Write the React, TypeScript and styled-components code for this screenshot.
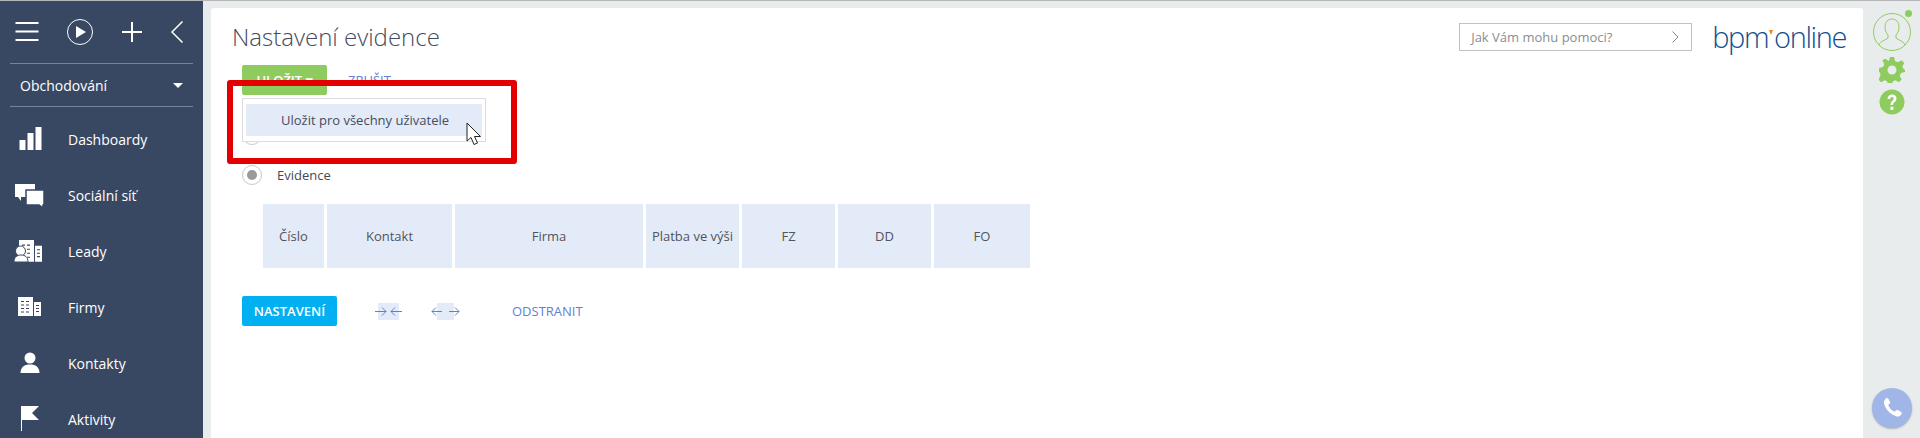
import React from 'react'
import styled, { createGlobalStyle } from 'styled-components'

const GlobalStyle = createGlobalStyle`
  html, body {
    margin: 0;
    padding: 0;
    height: 100%;
    background: #e9eced;
    font-family: 'Open Sans', 'Liberation Sans', sans-serif;
    overflow: hidden;
  }
  * { box-sizing: border-box; }
`

const Page = styled.div`
  display: flex;
  width: 1920px;
  height: 438px;
  overflow: hidden;
  border-top: 1px solid #b4b6b8;
`

const Sidebar = styled.aside`
  width: 203px;
  flex-shrink: 0;
  background: #394862;
  padding: 0 10px;
  color: #fff;
`

const TopIcons = styled.div`
  height: 63px;
  display: flex;
  align-items: center;
  justify-content: space-between;
  padding: 0 9px 0 5px;
  border-bottom: 1px solid #78839a;
`

const Workspace = styled.div`
  height: 43px;
  display: flex;
  align-items: center;
  justify-content: space-between;
  padding: 0 10px 0 10px;
  font-size: 14px;
  border-bottom: 1px solid #78839a;
`

const Caret = styled.span`
  width: 0;
  height: 0;
  border-left: 5px solid transparent;
  border-right: 5px solid transparent;
  border-top: 5px solid #fff;
`

const NavList = styled.nav`
  display: flex;
  flex-direction: column;
  padding-top: 4px;
`

const NavItem = styled.div`
  height: 56px;
  display: flex;
  align-items: center;
  font-size: 14px;
`

const NavIcon = styled.span`
  width: 58px;
  flex-shrink: 0;
  display: flex;
  align-items: center;
  padding-left: 8px;
`

const Main = styled.main`
  position: relative;
  flex: 1;
  margin: 7px 0 0 8px;
  background: #fff;
  border-radius: 3px 3px 0 0;
`

const Header = styled.header`
  height: 57px;
  display: flex;
  align-items: center;
  padding: 0 17px 0 21px;
`

const Title = styled.h1`
  margin: 0;
  flex: 1;
  font-size: 24px;
  font-weight: 300;
  color: #444b60;
`

const Search = styled.div`
  width: 233px;
  height: 28px;
  display: flex;
  align-items: center;
  justify-content: space-between;
  padding: 0 11px;
  border: 1px solid #c2c2c2;
  font-size: 13px;
  color: #8a8d92;
`

const Logo = styled.div`
  position: relative;
  margin-left: 20px;
  font-size: 29px;
  font-weight: 300;
  letter-spacing: -1.4px;
  line-height: 34px;
  color: #10508f;
`

const LogoMark = styled.span`
  display: inline-block;
  width: 0;
  height: 0;
  vertical-align: 13px;
  margin: 0 1px 0 1px;
  border-left: 2.5px solid transparent;
  border-right: 2.5px solid transparent;
  border-top: 5px solid #f58220;
`

const Toolbar = styled.div`
  display: flex;
  align-items: center;
  height: 30px;
  margin-left: 31px;
`

const SaveButton = styled.button`
  width: 85px;
  height: 30px;
  border: 0;
  border-radius: 2px;
  background: #8fcc5f;
  color: #fff;
  font: 600 13px 'Open Sans', sans-serif;
`

const LinkButton = styled.span`
  font-size: 13px;
  color: #5b82d8;
`

const CancelLink = styled(LinkButton)`
  margin-left: 21px;
`

const RadioList = styled.div`
  display: flex;
  flex-direction: column;
  gap: 20px;
  margin: 30px 0 0 31px;
`

const RadioRow = styled.label`
  display: flex;
  align-items: center;
  gap: 15px;
  height: 20px;
  font-size: 13px;
  color: #444b55;
`

const RadioCircle = styled.span<{ $on?: boolean }>`
  width: 20px;
  height: 20px;
  display: flex;
  align-items: center;
  justify-content: center;
  border: 1px solid #c8c8c8;
  border-radius: 50%;
  &::after {
    content: '';
    width: 10px;
    height: 10px;
    border-radius: 50%;
    background: ${({ $on }) => ($on ? '#9a9a9a' : 'transparent')};
  }
`

const Table = styled.div`
  display: flex;
  gap: 3px;
  margin: 19px 0 0 52px;
`

const Column = styled.div<{ $w: number }>`
  width: ${({ $w }) => $w}px;
  height: 64px;
  display: flex;
  align-items: center;
  justify-content: center;
  background: #e4ebf8;
  font-size: 13px;
  color: #50545e;
`

const Actions = styled.div`
  display: flex;
  align-items: center;
  height: 30px;
  margin: 28px 0 0 31px;
`

const SettingsButton = styled.button`
  width: 95px;
  height: 30px;
  border: 0;
  border-radius: 2px;
  background: #00b0f0;
  color: #fff;
  font: 600 13px 'Open Sans', sans-serif;
`

const ArrowButton = styled.span<{ $ml: number; $w: number }>`
  position: relative;
  display: block;
  margin-left: ${({ $ml }) => $ml}px;
  width: ${({ $w }) => $w}px;
  height: 17px;
  background: #e4ebf8;
  overflow: visible;
  svg {
    position: absolute;
    top: 3px;
    left: -6px;
    overflow: visible;
  }
`

const RemoveLink = styled(LinkButton)`
  margin-left: 58px;
`

const Highlight = styled.div`
  position: absolute;
  left: 16px;
  top: 72px;
  width: 290px;
  height: 84px;
  border: 6px solid #e30000;
  border-radius: 3px;
`

const Dropdown = styled.div`
  position: absolute;
  left: 31px;
  top: 90px;
  width: 244px;
  height: 44px;
  padding: 5px 3px;
  background: #fff;
  border: 1px solid #dcdcdc;
`

const DropdownItem = styled.div`
  height: 32px;
  display: flex;
  align-items: center;
  padding-left: 35px;
  background: #e4ebf8;
  font-size: 13px;
  color: #444b60;
`

const Pointer = styled.svg`
  position: absolute;
  left: 255px;
  top: 114px;
`

const RightRail = styled.aside`
  position: relative;
  width: 57px;
  flex-shrink: 0;
  display: flex;
  flex-direction: column;
  align-items: center;
  padding: 12px 0 10px;
`

const StatusDot = styled.span`
  position: absolute;
  top: 9px;
  left: 42px;
  width: 7px;
  height: 7px;
  border-radius: 50%;
  background: #8fcc5f;
`

const RailIcon = styled.span`
  display: block;
  height: 26px;
  margin-top: 6px;
`

const PhoneButton = styled.button`
  margin-top: auto;
  width: 40px;
  height: 40px;
  border: 0;
  padding: 0;
  border-radius: 50%;
  background: #a0b6e8;
  box-shadow: 0 1px 2px rgba(0, 0, 0, 0.25);
  display: flex;
  align-items: center;
  justify-content: center;
`

const columns: [string, number][] = [
  ['Číslo', 61],
  ['Kontakt', 125],
  ['Firma', 188],
  ['Platba ve výši', 93],
  ['FZ', 93],
  ['DD', 93],
  ['FO', 96],
]

const Building = () => (
  <>
    <path d="M0 0h15v19H0zM16 5h7v14h-7z" fill="#fff" />
    <path
      d="M3 4h3v1H3zM8 4h3v1H8zM3 7.500h3v1H3zM8 7.500h3v1H8zM3 11h3v1H3zM8 11h3v1H8zM3 14.500h3v1H3zM8 14.500h3v1H8zM18 8h3v1h-3zM18 11h3v1h-3zM18 14h3v1h-3z"
      fill="#394862"
    />
  </>
)

const navItems: [string, React.ReactNode][] = [
  [
    'Dashboardy',
    <svg width="24" height="24" viewBox="0 0 24 24" key="d">
      <path d="M2 14h6v10H2zM10 7h6v17h-6zM18 1h6v23h-6z" transform="translate(-0.500 -1)" fill="#fff" />
    </svg>,
  ],
  [
    'Sociální síť',
    <svg width="30" height="24" viewBox="0 0 30 24" style={{ marginLeft: -3 }} key="s">
      <path d="M0 1h20v13H6v4l-3-4H0z" fill="#fff" />
      <path d="M11 7h18v15h-1v3l-4-3H11z" fill="#fff" stroke="#394862" strokeWidth="1.500" />
    </svg>,
  ],
  [
    'Leady',
    <svg width="30" height="24" viewBox="0 0 30 24" style={{ marginLeft: -4 }} key="l">
      <g transform="translate(5 1) scale(1 1.150)">
        <Building />
      </g>
      <circle cx="6.500" cy="12" r="5" fill="#fff" stroke="#394862" />
      <path d="M0 23c0-5 3-7 7-7s7 2 7 7z" fill="#fff" stroke="#394862" />
    </svg>,
  ],
  [
    'Firmy',
    <svg width="24" height="20" viewBox="0 0 24 20" key="f">
      <Building />
    </svg>,
  ],
  [
    'Kontakty',
    <svg width="22" height="22" viewBox="0 0 22 22" style={{ marginLeft: 1 }} key="k">
      <circle cx="11" cy="6" r="5.500" fill="#fff" />
      <path d="M1.500 21c0-6 4-8.500 9.500-8.500s9.500 2.500 9.500 8.500z" fill="#fff" />
    </svg>,
  ],
  [
    'Aktivity',
    <svg width="20" height="26" viewBox="0 0 20 26" style={{ marginLeft: 2 }} key="a">
      <path d="M1 0h1v25H1z" fill="#fff" />
      <path d="M2 0h17l-7 7 7 7H2z" fill="#fff" />
    </svg>,
  ],
]

export default function App() {
  return (
    <Page>
      <GlobalStyle />
      <Sidebar>
        <TopIcons>
          <svg width="24" height="20" viewBox="0 0 24 20">
            <path d="M0.500 1h23M0.500 9.500h23M0.500 18h23" stroke="#fff" strokeWidth="2" />
          </svg>
          <svg width="28" height="28" viewBox="0 0 28 28">
            <circle cx="14" cy="14" r="12.500" fill="none" stroke="#fff" />
            <path d="M10 8l10 6-10 6z" fill="#fff" />
          </svg>
          <svg width="22" height="22" viewBox="0 0 22 22">
            <path d="M11 1v20M1 11h20" stroke="#fff" strokeWidth="2" />
          </svg>
          <svg width="14" height="24" viewBox="0 0 14 24">
            <path d="M12.500 1.500L2 12l10.500 10.500" fill="none" stroke="#fff" strokeWidth="1.500" />
          </svg>
        </TopIcons>
        <Workspace>
          Obchodování
          <Caret />
        </Workspace>
        <NavList>
          {navItems.map(([label, icon]) => (
            <NavItem key={label}>
              <NavIcon>{icon}</NavIcon>
              {label}
            </NavItem>
          ))}
        </NavList>
      </Sidebar>

      <Main>
        <Header>
          <Title>Nastavení evidence</Title>
          <Search>
            Jak Vám mohu pomoci?
            <svg width="9" height="14" viewBox="0 0 9 14">
              <path d="M1.500 1.500L7 7l-5.500 5.500" fill="none" stroke="#85888c" />
            </svg>
          </Search>
          <Logo>
            bpm
            <LogoMark />
            online
          </Logo>
        </Header>

        <Toolbar>
          <SaveButton>ULOŽIT ▾</SaveButton>
          <CancelLink>ZRUŠIT</CancelLink>
        </Toolbar>

        <RadioList>
          <RadioRow>
            <RadioCircle />
            Stránka
          </RadioRow>
          <RadioRow>
            <RadioCircle $on />
            Evidence
          </RadioRow>
        </RadioList>

        <Table>
          {columns.map(([label, w]) => (
            <Column key={label} $w={w}>
              {label}
            </Column>
          ))}
        </Table>

        <Actions>
          <SettingsButton>NASTAVENÍ</SettingsButton>
          <ArrowButton $ml={41} $w={21}>
            <svg width="27" height="11" viewBox="0 0 27 11" style={{ left: -3 }}>
              <path d="M0 5.500h11M7 1.500l4 4-4 4M27 5.500H16M20 1.500l-4 4 4 4" fill="none" stroke="#5b82d8" />
            </svg>
          </ArrowButton>
          <ArrowButton $ml={38} $w={17}>
            <svg width="29" height="11" viewBox="0 0 29 11">
              <path d="M1 5.500h10M5 1.500l-4 4 4 4M18 5.500h10M24 1.500l4 4-4 4" fill="none" stroke="#5b82d8" />
            </svg>
          </ArrowButton>
          <RemoveLink>ODSTRANIT</RemoveLink>
        </Actions>

        <Highlight />
        <Dropdown>
          <DropdownItem>Uložit pro všechny uživatele</DropdownItem>
        </Dropdown>
        <Pointer width="16" height="25" viewBox="0 0 16 25">
          <path d="M1 1v18l4-3.500 3 7 3.500-1.500-3-6.500h6z" fill="#fff" stroke="#222" strokeWidth="1" />
        </Pointer>
      </Main>

      <RightRail>
        <StatusDot />
        <svg width="38" height="38" viewBox="0 0 38 38">
          <circle cx="19" cy="19" r="18.500" fill="none" stroke="#8fcc5f" />
          <path
            d="M6 32c1-4 7-5 9-7v-3c-2-2-3-5-3-8 0-5 3-8 7-8s7 3 7 8c0 3-1 6-3 8v3c2 2 8 3 9 7"
            fill="none"
            stroke="#8fcc5f"
          />
        </svg>
        <RailIcon>
          <svg width="26" height="26" viewBox="0 0 26 26">
            <path
              d="M11 0h4l1 4 3 1.300 3.500-2 2.800 2.800-2 3.500L24.600 12l1.400 1v2l-4 1-1.300 3 2 3.500-2.800 2.800-3.500-2-2.400 1-1 3.700h-4l-1-3.700-2.400-1-3.500 2-2.800-2.800 2-3.500L1.300 16 0 15v-4l4-1 1.300-3-2-3.500L6 1.700l3.500 2L10 4z"
              fill="#8fcc5f"
            />
            <circle cx="13" cy="13" r="4.500" fill="#e9eced" />
          </svg>
        </RailIcon>
        <RailIcon>
          <svg width="26" height="26" viewBox="0 0 26 26">
            <circle cx="13" cy="13" r="12.500" fill="#8fcc5f" />
            <path d="M8.500 10c0-3 2-4.500 4.500-4.500s4.500 1.500 4.500 4c0 3.500-3.500 3.500-3.500 6.500h-2.500c0-4 3.200-4 3.200-6.500 0-1-.7-1.600-1.700-1.600s-1.800.7-1.800 2.100z" fill="#fff" />
            <rect x="11.400" y="17.800" width="3" height="3" fill="#fff" />
          </svg>
        </RailIcon>
        <PhoneButton>
          <svg width="22" height="22" viewBox="0 0 22 22">
            <path
              d="M5 1.500c1-.7 2-.5 2.500.5l1.500 3c.3.800 0 1.500-.7 2L7.200 8c.8 2.800 3.800 5.800 6.600 6.800l1-1.200c.5-.6 1.300-.8 2-.5l3 1.600c1 .5 1.200 1.500.5 2.500-1 1.700-2.700 2.800-4.500 2.300C9.500 17.500 4.500 12.500 3 6.500 2.600 4.500 3.500 2.500 5 1.500z"
              fill="#fff"
            />
          </svg>
        </PhoneButton>
      </RightRail>
    </Page>
  )
}
